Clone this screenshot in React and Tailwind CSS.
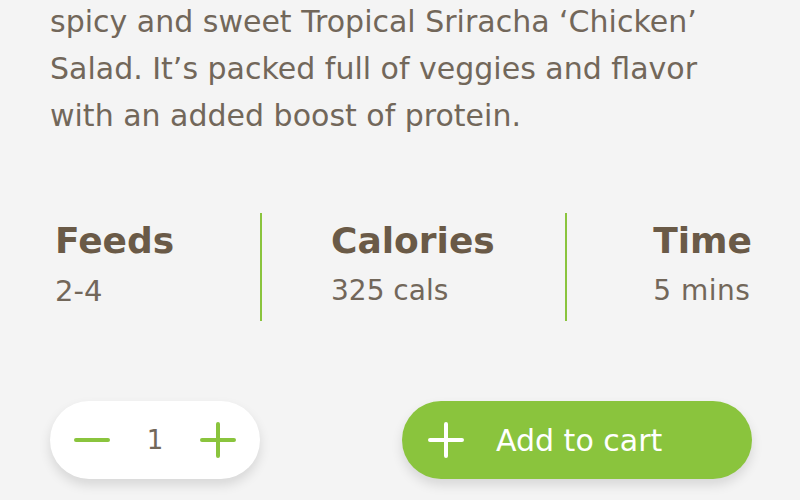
import React, { useState } from 'react'

const Minus = () => (
  <svg width="36" height="36" viewBox="0 0 36 36" fill="none">
    <path d="M2 18h32" stroke="#8ac43d" strokeWidth="4" strokeLinecap="round" />
  </svg>
)

const Plus = ({ color = '#8ac43d' }) => (
  <svg width="36" height="36" viewBox="0 0 36 36" fill="none">
    <path d="M2 18h32M18 2v32" stroke={color} strokeWidth="4" strokeLinecap="round" />
  </svg>
)

export default function App() {
  const [qty, setQty] = useState(1)

  return (
    <div className="w-[800px] h-[500px] overflow-hidden bg-[#f4f4f4] pl-[50px] pr-[48px] font-['DejaVu_Sans',sans-serif]">
      <p className="-mt-[2px] text-[30px] leading-[47px] text-[#72675a] whitespace-nowrap">
        spicy and sweet Tropical Sriracha ‘Chicken’<br />
        Salad. It’s packed full of veggies and flavor<br />
        with an added boost of protein.
      </p>

      <div className="mt-[74px] flex items-stretch h-[108px]">
        <div className="w-[210px] pl-[5px] flex flex-col justify-center">
          <div className="text-[36px] font-bold text-[#6a5a47] leading-[40px] -mt-[6px]">Feeds</div>
          <div className="text-[29px] text-[#72675a] leading-[32px] mt-[14px]">2-4</div>
        </div>
        <div className="w-[2px] bg-[#8ac43d]" />
        <div className="w-[303px] pl-[69px] flex flex-col justify-center">
          <div className="text-[36px] font-bold text-[#6a5a47] leading-[40px] -mt-[6px]">Calories</div>
          <div className="text-[28px] text-[#72675a] leading-[32px] mt-[14px]">325 cals</div>
        </div>
        <div className="w-[2px] bg-[#8ac43d]" />
        <div className="flex-1 flex flex-col justify-center items-end">
          <div className="text-left">
            <div className="text-[36px] font-bold text-[#6a5a47] leading-[40px] -mt-[6px]">Time</div>
            <div className="text-[28px] text-[#72675a] leading-[32px] mt-[14px] tracking-[0.5px]">5 mins</div>
          </div>
        </div>
      </div>

      <div className="mt-[80px] flex justify-between">
        <div className="w-[210px] h-[78px] rounded-full bg-white shadow-[0_6px_12px_rgba(0,0,0,0.12)] flex items-center justify-between px-[24px]">
          <button onClick={() => setQty(Math.max(1, qty - 1))}><Minus /></button>
          <span className="text-[26px] text-[#72675a]">{qty}</span>
          <button onClick={() => setQty(qty + 1)}><Plus /></button>
        </div>
        <button className="w-[350px] h-[78px] rounded-full bg-[#8ac43d] shadow-[0_6px_12px_rgba(0,0,0,0.12)] flex items-center pl-[26px]">
          <Plus color="#ffffff" />
          <span className="ml-[32px] text-[30px] text-white">Add to cart</span>
        </button>
      </div>
    </div>
  )
}
